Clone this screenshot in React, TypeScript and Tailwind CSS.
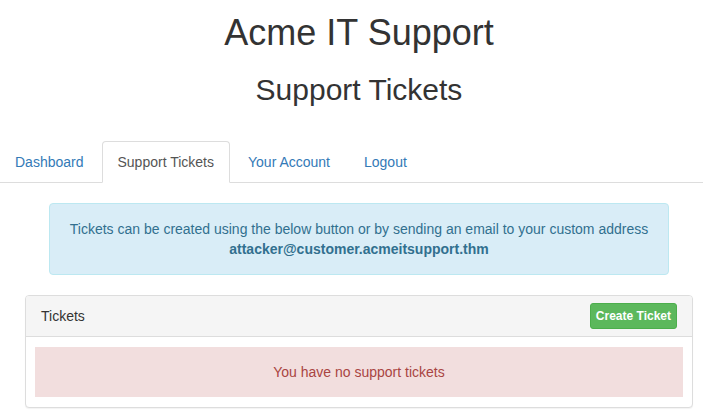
import React from "react";

export default function App() {
  const font = { fontFamily: '"Liberation Sans", Arial, Helvetica, sans-serif' };
  return (
    <div className="min-h-screen bg-white text-[#333] text-[14px] leading-[20px]" style={font}>
      <div className="w-[718px]">
        <h1 className="mt-[13px] mb-0 text-center text-[36px] leading-[39.6px] font-normal">Acme IT Support</h1>
        <h2 className="mt-[20px] mb-0 text-center text-[30px] leading-[33px] font-normal">Support Tickets</h2>
      </div>
      <ul className="mt-[35px] flex w-[703px] border-b border-[#ddd]">
        <li className="-mb-px mr-[2px] -ml-px">
          <a className="block px-[15px] py-[10px] border border-transparent rounded-t-[4px] text-[#337ab7]">Dashboard</a>
        </li>
        <li className="-mb-px mr-[2px]">
          <a className="block px-[15px] py-[10px] border border-[#ddd] border-b-transparent bg-white rounded-t-[4px] text-[#555]">Support Tickets</a>
        </li>
        <li className="-mb-px mr-[2px]">
          <a className="block px-[15px] py-[10px] border border-transparent rounded-t-[4px] text-[#337ab7]">Your Account</a>
        </li>
        <li className="-mb-px mr-[2px]">
          <a className="block px-[15px] py-[10px] border border-transparent rounded-t-[4px] text-[#337ab7]">Logout</a>
        </li>
      </ul>
      <div className="w-[718px] mt-[20px] flex flex-col items-center">
        <div className="w-[620px] px-[15px] py-[15px] border border-[#bce8f1] bg-[#d9edf7] text-[#31708f] rounded-[4px] text-center">
          <div>Tickets can be created using the below button or by sending an email to your custom address</div>
          <div className="font-bold">attacker@customer.acmeitsupport.thm</div>
        </div>
        <div className="mt-[20px] w-[668px] border border-[#ddd] rounded-[4px] bg-white shadow-[0_1px_1px_rgba(0,0,0,0.05)]">
          <div className="flex items-center justify-between px-[15px] py-[7px] bg-[#f5f5f5] border-b border-[#ddd] rounded-t-[3px]">
            <span>Tickets</span>
            <button className="px-[5px] py-[3px] text-[12px] leading-[18px] font-bold text-white bg-[#5cb85c] border border-[#4cae4c] rounded-[3px]">
              Create Ticket
            </button>
          </div>
          <div className="px-[9px] py-[10px]">
            <div className="py-[15px] bg-[#f2dede] text-[#a94442] text-center">
              You have no support tickets
            </div>
          </div>
        </div>
      </div>
    </div>
  );
}
